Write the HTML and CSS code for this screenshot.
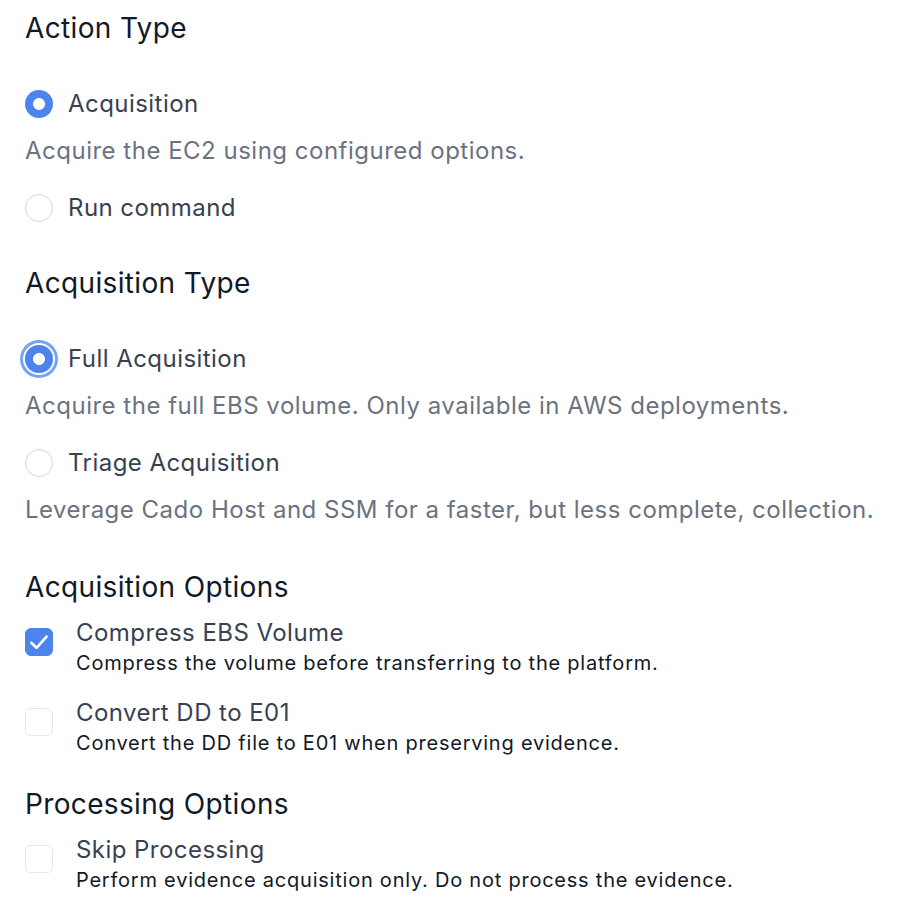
FILE: index.html
```html
<!DOCTYPE html>
<html>
<head>
<meta charset="utf-8">
<link rel="stylesheet" href="styles.css">
</head>
<body>
<div class="page">
  <section class="section">
    <h2 class="heading">Action Type</h2>
    <div class="radio-group">
      <div class="radio-item">
        <label class="radio-row"><span class="radio checked"></span><span class="radio-label">Acquisition</span></label>
        <p class="radio-desc">Acquire the EC2 using configured options.</p>
      </div>
      <div class="radio-item">
        <label class="radio-row"><span class="radio"></span><span class="radio-label">Run command</span></label>
      </div>
    </div>
  </section>
  <section class="section after-radio">
    <h2 class="heading">Acquisition Type</h2>
    <div class="radio-group">
      <div class="radio-item">
        <label class="radio-row"><span class="radio checked focused"></span><span class="radio-label">Full Acquisition</span></label>
        <p class="radio-desc">Acquire the full EBS volume. Only available in AWS deployments.</p>
      </div>
      <div class="radio-item">
        <label class="radio-row"><span class="radio"></span><span class="radio-label">Triage Acquisition</span></label>
        <p class="radio-desc">Leverage Cado Host and SSM for a faster, but less complete, collection.</p>
      </div>
    </div>
  </section>
  <section class="section after-desc">
    <h2 class="heading">Acquisition Options</h2>
    <div class="check-group">
      <label class="check-row">
        <span class="checkbox checked"><svg viewBox="0 0 16 16" width="28" height="28"><path d="M3.6 8.4 L6.6 11.3 L12.3 4.9" fill="none" stroke="#fff" stroke-width="1.5" stroke-linecap="round" stroke-linejoin="round"/></svg></span>
        <span class="check-text"><span class="check-label">Compress EBS Volume</span><span class="check-desc">Compress the volume before transferring to the platform.</span></span>
      </label>
      <label class="check-row">
        <span class="checkbox"></span>
        <span class="check-text"><span class="check-label">Convert DD to E01</span><span class="check-desc">Convert the DD file to E01 when preserving evidence.</span></span>
      </label>
    </div>
  </section>
  <section class="section after-check">
    <h2 class="heading">Processing Options</h2>
    <div class="check-group">
      <label class="check-row">
        <span class="checkbox"></span>
        <span class="check-text"><span class="check-label">Skip Processing</span><span class="check-desc">Perform evidence acquisition only. Do not process the evidence.</span></span>
      </label>
    </div>
  </section>
</div>
</body>
</html>
```

FILE: styles.css
```css
* { box-sizing: border-box; }
html, body { margin: 0; padding: 0; background: #fff; }
body { font-family: Inter, "Noto Sans", sans-serif; }
.page { padding: 10px 0 0 25px; display: flex; flex-direction: column; }
.section { display: flex; flex-direction: column; }
.section.after-radio { margin-top: 39px; }
.section.after-desc { margin-top: 43px; }
.section.after-check { margin-top: 29px; }
.heading { margin: 0; font-size: 28px; line-height: 36px; font-weight: 400; color: #111827; letter-spacing: 0.35px; white-space: nowrap; }
.radio-group { margin-top: 40px; display: flex; flex-direction: column; gap: 23px; }
.radio-row { display: flex; align-items: center; gap: 15px; height: 36px; }
.radio { width: 28px; height: 28px; border-radius: 50%; border: 1px solid #d1d5db; background: #fff; flex: none; }
.radio.checked { border: none; background: radial-gradient(circle, #fff 0 5.6px, #4d83ec 6.3px); }
.radio.focused { box-shadow: 0 0 0 2px #fff, 0 0 0 5px #76a3f3; }
.radio-label { font-size: 24px; color: #374151; line-height: 36px; letter-spacing: 0.45px; white-space: nowrap; }
.radio-desc { margin: 13px 0 0; font-size: 24px; line-height: 32px; color: #6b7280; letter-spacing: 0.5px; white-space: nowrap; }
.check-group { margin-top: 12px; display: flex; flex-direction: column; gap: 20px; }
.check-row { display: flex; align-items: flex-start; gap: 23px; }
.checkbox { width: 28px; height: 28px; margin-top: 11px; border-radius: 6px; border: 1px solid #e5e7eb; background: #fff; flex: none; display: flex; }
.checkbox.checked { background: #4d83ec; border-color: #4d83ec; }
.checkbox svg { display: block; margin: -1px; }
.check-text { display: flex; flex-direction: column; }
.check-label { font-size: 24px; line-height: 32px; color: #374151; letter-spacing: 0.45px; white-space: nowrap; }
.check-desc { font-size: 20px; line-height: 28px; color: #111827; letter-spacing: 0.77px; white-space: nowrap; }
```
